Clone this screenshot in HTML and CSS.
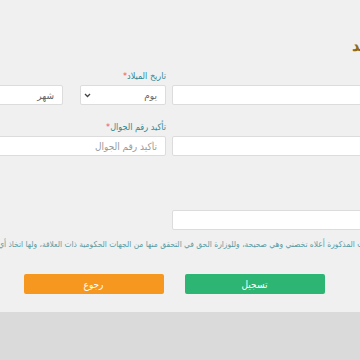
FILE: index.html
```html
<!DOCTYPE html>
<html lang="ar" dir="rtl">
<head>
    <meta charset="UTF-8">
    <meta name="viewport" content="width=device-width, initial-scale=1.0">
    <title>تسجيل مستخدم جديد</title>
    <link rel="stylesheet" href="styles.css">
</head>
<body>

    <div class="main">
        <div class="stage">
            <!-- عنوان الصفحة -->
            <h1 class="title">تسجيل مستخدم جديد</h1>

            <!-- الصف الأول -->
            <div class="row">
                <div class="field">
                    <label class="label">رقم الجوال<span class="req">*</span></label>
                    <input type="text" class="input">
                </div>
                <div class="field">
                    <label class="label">تاريخ الميلاد<span class="req">*</span></label>
                    <div class="date">
                        <div class="select">
                            <span>يوم</span>
                            <svg class="chev" width="7" height="5" viewBox="0 0 7 5"><path d="M1 1 L3.5 3.5 L6 1" fill="none" stroke="#444" stroke-width="1.3"/></svg>
                        </div>
                        <div class="select">
                            <span>شهر</span>
                            <svg class="chev" width="7" height="5" viewBox="0 0 7 5"><path d="M1 1 L3.5 3.5 L6 1" fill="none" stroke="#444" stroke-width="1.3"/></svg>
                        </div>
                        <div class="select">
                            <span>سنة</span>
                            <svg class="chev" width="7" height="5" viewBox="0 0 7 5"><path d="M1 1 L3.5 3.5 L6 1" fill="none" stroke="#444" stroke-width="1.3"/></svg>
                        </div>
                    </div>
                </div>
            </div>

            <!-- الصف الثاني -->
            <div class="row">
                <div class="field">
                    <label class="label">البريد الإلكتروني<span class="req">*</span></label>
                    <input type="text" class="input">
                </div>
                <div class="field">
                    <label class="label">تأكيد رقم الجوال<span class="req">*</span></label>
                    <input type="text" class="input" placeholder="تأكيد رقم الجوال">
                </div>
            </div>

            <!-- الصف الثالث -->
            <div class="row row-3">
                <div class="field">
                    <label class="label">رمز التحقق<span class="req">*</span></label>
                    <input type="text" class="input">
                </div>
                <div class="field"></div>
            </div>

            <p class="terms">أقر بأن جميع البيانات المذكورة أعلاه تخصني وهي صحيحة، وللوزارة الحق في التحقق منها من الجهات الحكومية ذات العلاقة، ولها اتخاذ أي إجراء نظامي</p>

            <div class="actions">
                <button class="btn btn-green">تسجيل</button>
                <button class="btn btn-orange">رجوع</button>
            </div>
        </div>
    </div>

    <div class="footer"></div>

</body>
</html>
```

FILE: styles.css
```css
/* الصفحة */
html, body {
    overflow: hidden;
}

body {
    margin: 0;
    background: #f0f0f0;
    font-family: "DejaVu Sans Condensed", "DejaVu Sans", sans-serif;
    width: 360px;
    height: 360px;
}

.main {
    height: 312px;
    padding-top: 36px;
    box-sizing: border-box;
}

/* مساحة النموذج أعرض من النافذة */
.stage {
    width: 590px;
    margin-right: -104px;
}

.title {
    margin: 0;
    margin-right: -200px;
    padding-left: 478px;
    height: 20px;
    line-height: 20px;
    font-size: 16px;
    font-weight: bold;
    color: #8c6a1c;
    text-align: left;
    white-space: nowrap;
}

.row {
    display: grid;
    grid-template-columns: 292px 292px;
    column-gap: 6px;
    margin-top: 13px;
}

.row + .row {
    margin-top: 15px;
}

.row.row-3 {
    margin-top: 38px;
}

.label {
    display: block;
    height: 14px;
    line-height: 14px;
    margin-bottom: 2px;
    font-size: 9px;
    color: #2f8893;
}

.req {
    color: #e8585a;
}

.input {
    display: block;
    width: 100%;
    height: 20px;
    box-sizing: border-box;
    border: 1px solid #dcdcdc;
    border-radius: 2px;
    background: #fff;
    padding: 0 8px;
    font-family: "DejaVu Sans Condensed", "DejaVu Sans", sans-serif;
    font-size: 10px;
    color: #555;
    outline: none;
}

.input::placeholder {
    color: #9a9a9a;
}

.date {
    display: flex;
    gap: 17px;
}

.select {
    flex: 1;
    height: 20px;
    box-sizing: border-box;
    border: 1px solid #dcdcdc;
    border-radius: 2px;
    background: #fff;
    display: flex;
    justify-content: space-between;
    align-items: center;
    padding: 0 8px 0 3px;
    font-size: 10px;
    color: #666;
}

.chev {
    display: block;
}

.terms {
    margin: 6px 0 0 0;
    margin-right: -200px;
    padding-right: 242px;
    height: 16px;
    line-height: 16px;
    font-size: 8.35px;
    color: #5a9ca4;
    white-space: nowrap;
}

.actions {
    display: flex;
    justify-content: center;
    gap: 21px;
    margin-top: 22px;
    padding-left: 10px;
}

.btn {
    width: 140px;
    height: 20px;
    border: none;
    border-radius: 2px;
    color: #fff;
    font-family: "DejaVu Sans Condensed", "DejaVu Sans", sans-serif;
    font-size: 10px;
    cursor: pointer;
}

.btn-green {
    background: #2db573;
}

.btn-orange {
    background: #f6981f;
}

.footer {
    height: 48px;
    background: #dadada;
}
```
